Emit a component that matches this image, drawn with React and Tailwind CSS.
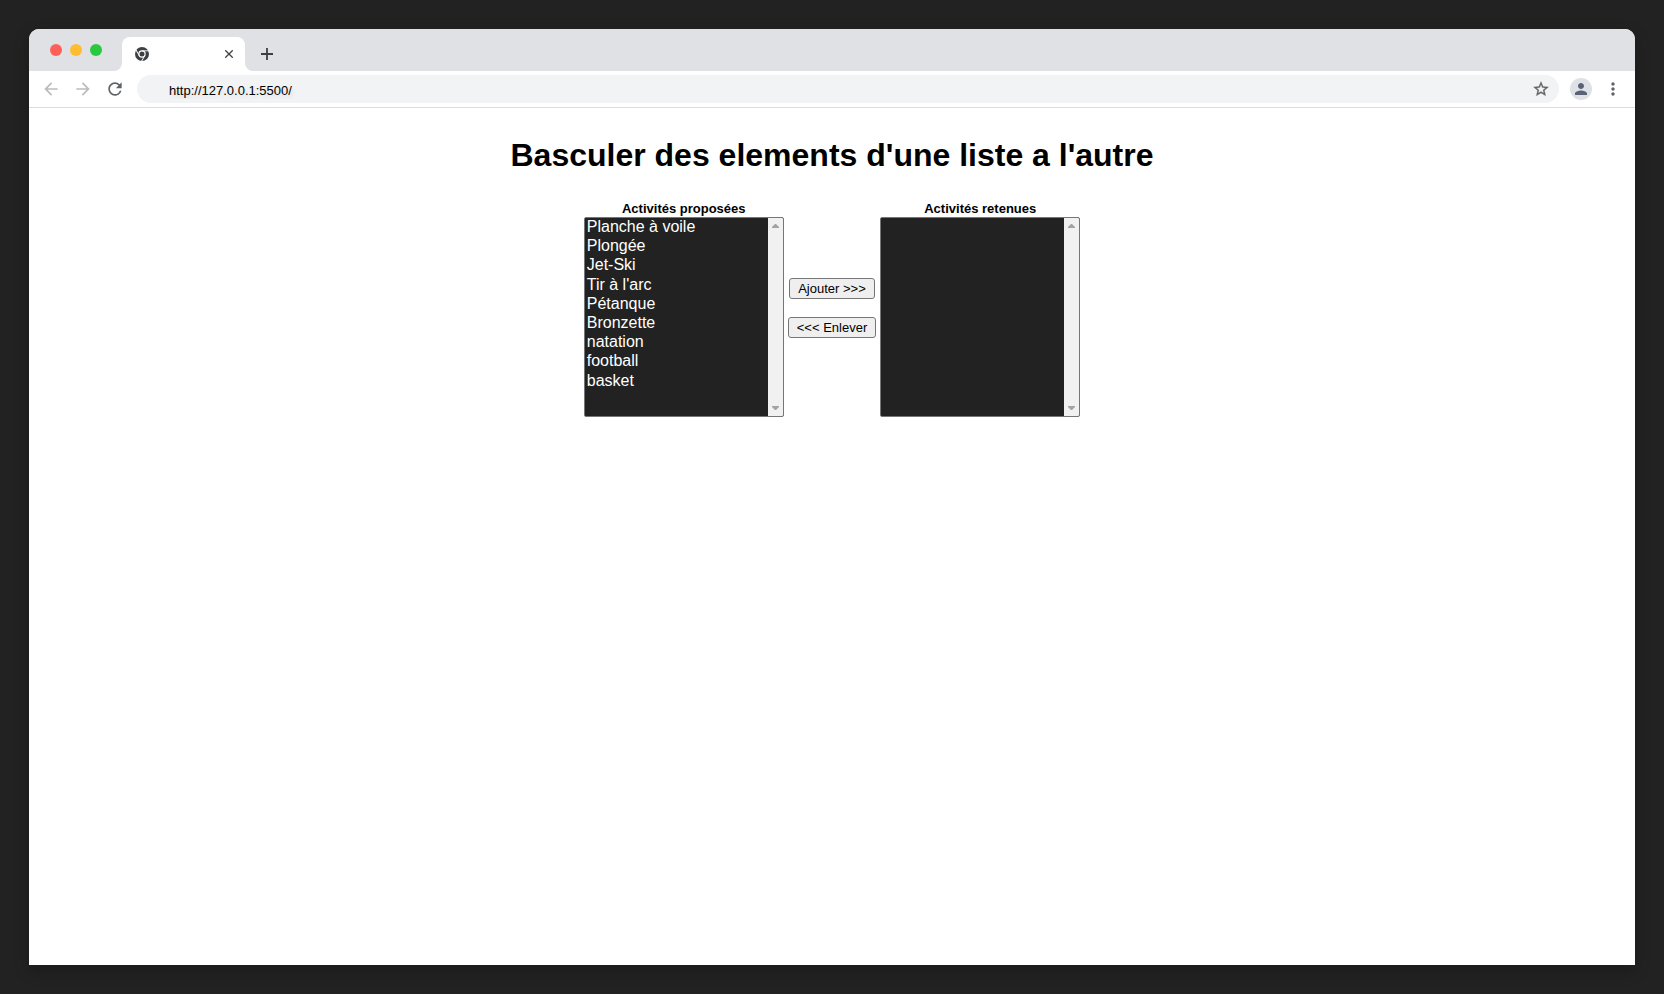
import { useState } from 'react';
import {
  MdArrowBack,
  MdArrowForward,
  MdMoreVert,
  MdPerson,
  MdRefresh,
} from 'react-icons/md';

const ACTIVITIES = [
  'Planche à voile',
  'Plongée',
  'Jet-Ski',
  "Tir à l'arc",
  'Pétanque',
  'Bronzette',
  'natation',
  'football',
  'basket',
];

function ChromeIcon() {
  return (
    <svg className="size-[14px]" viewBox="0 0 14 14" fill="none" aria-hidden="true">
      <circle cx="7" cy="7" r="7" fill="#3c4043" />
      <circle cx="7" cy="7" r="3.1" stroke="white" strokeWidth="1.2" />
      <g stroke="white" strokeWidth="0.9">
        <path d="M7 3.8h7" />
        <path d="M7 3.8h7" transform="rotate(120 7 7)" />
        <path d="M7 3.8h7" transform="rotate(240 7 7)" />
      </g>
    </svg>
  );
}

function StarIcon() {
  return (
    <svg className="size-[18px]" viewBox="0 0 24 24" fill="currentColor" stroke="currentColor" strokeWidth="0.4" aria-hidden="true">
      <path d="M22 9.24l-7.19-.62L12 2 9.19 8.63 2 9.24l5.46 4.73L5.82 21 12 17.27 18.18 21l-1.63-7.03L22 9.24zM12 15.4l-3.76 2.27 1-4.28-3.32-2.88 4.38-.38L12 6.1l1.71 4.04 4.38.38-3.32 2.88 1 4.28L12 15.4z" />
    </svg>
  );
}

function TabStrip() {
  return (
    <header className="flex h-[42px] items-end bg-[#dfe1e5]">
      <div className="flex gap-2 self-center pl-[21px]">
        <span className="size-3 rounded-full bg-[#ff5f57]" />
        <span className="size-3 rounded-full bg-[#febc2e]" />
        <span className="size-3 rounded-full bg-[#28c840]" />
      </div>
      <svg className="ml-3 size-2 fill-white" viewBox="0 0 8 8" aria-hidden="true">
        <path d="M8 0v8H0a8 8 0 0 0 8-8z" />
      </svg>
      <div className="flex h-[34px] w-[123px] items-center justify-between rounded-t-lg bg-white pl-[13px] pr-3 text-[#3c4043]">
        <ChromeIcon />
        <button type="button" aria-label="Close tab">
          <svg className="size-2" viewBox="0 0 8 8" fill="none" stroke="currentColor" strokeWidth="1.3" aria-hidden="true">
            <path d="M.3.3l7.4 7.4M7.7.3L.3 7.7" />
          </svg>
        </button>
      </div>
      <svg className="size-2 fill-white" viewBox="0 0 8 8" aria-hidden="true">
        <path d="M0 0v8h8a8 8 0 0 1-8-8z" />
      </svg>
      <button type="button" aria-label="New tab" className="flex h-[34px] items-center pl-2 text-[#3c4043]">
        <svg className="size-3" viewBox="0 0 12 12" fill="none" stroke="currentColor" strokeWidth="1.8" aria-hidden="true">
          <path d="M6 0v12M0 6h12" />
        </svg>
      </button>
    </header>
  );
}

function Toolbar() {
  return (
    <div className="flex h-[37px] items-center border-b border-[#dadce0] bg-white px-3">
      <div className="flex gap-3 text-[#5f6368]">
        <button type="button" aria-label="Back" className="text-[#babcbe]">
          <MdArrowBack size={20} />
        </button>
        <button type="button" aria-label="Forward" className="text-[#babcbe]">
          <MdArrowForward size={20} />
        </button>
        <button type="button" aria-label="Reload">
          <MdRefresh size={20} />
        </button>
      </div>
      <div className="ml-3 flex h-7 flex-1 items-center rounded-full bg-[#f1f3f4] pl-8 pr-[9px]">
        <input
          aria-label="Address"
          className="min-w-0 flex-1 bg-transparent pt-[3px] text-[13px] leading-4 text-black outline-none text-shadow-[2px_3px_4px_rgb(0_0_0/0.1)]"
          defaultValue="http://127.0.0.1:5500/"
        />
        <button type="button" aria-label="Bookmark" className="text-[#5f6368]">
          <StarIcon />
        </button>
      </div>
      <button
        type="button"
        aria-label="Profile"
        className="ml-[11px] flex size-[22px] items-center justify-center rounded-full bg-[#dee1e6] text-[#5a6275]"
      >
        <MdPerson size={18} />
      </button>
      <button type="button" aria-label="Menu" className="ml-[11px] text-[#5f6368]">
        <MdMoreVert size={20} />
      </button>
    </div>
  );
}

function ScrollGutter() {
  return (
    <div className="flex w-[15px] flex-col items-center justify-between bg-[#f1f1f1] py-[6px]" aria-hidden="true">
      <svg className="h-1 w-[7px] fill-[#a3a3a3]" viewBox="0 0 7 4">
        <path d="M3 0h1l3 3v1H0V3z" />
      </svg>
      <svg className="h-1 w-[7px] fill-[#a3a3a3]" viewBox="0 0 7 4">
        <path d="M0 0h7v1L4 4H3L0 1z" />
      </svg>
    </div>
  );
}

function ActivityList({ id, label, items, selected, onSelect }) {
  return (
    <div className="flex flex-col items-center">
      <label htmlFor={id} className="text-[13px] font-bold leading-4">
        {label}
      </label>
      <div className="flex h-[200px] w-[200px] overflow-hidden rounded-xs border border-[#767676] bg-[#222222]">
        <select
          id={id}
          multiple
          value={selected}
          onChange={(e) => onSelect(Array.from(e.target.selectedOptions, (o) => o.value))}
          className="min-w-0 flex-1 text-base text-white outline-none"
        >
          {items.map((item) => (
            <option key={item} value={item} className="px-[2px] pb-px">
              {item}
            </option>
          ))}
        </select>
        <ScrollGutter />
      </div>
    </div>
  );
}

function MoveButton({ onClick, children }) {
  return (
    <button
      type="button"
      onClick={onClick}
      className="rounded-[3px] border border-[#767676] bg-[#efefef] px-2 py-[2px] text-[13px] leading-[15px] text-black"
    >
      {children}
    </button>
  );
}

export default function App() {
  const [proposed, setProposed] = useState(ACTIVITIES);
  const [kept, setKept] = useState([]);
  const [proposedPick, setProposedPick] = useState([]);
  const [keptPick, setKeptPick] = useState([]);

  const add = () => {
    setKept([...kept, ...proposedPick]);
    setProposed(proposed.filter((a) => !proposedPick.includes(a)));
    setProposedPick([]);
  };
  const remove = () => {
    setProposed([...proposed, ...keptPick]);
    setKept(kept.filter((a) => !keptPick.includes(a)));
    setKeptPick([]);
  };

  return (
    <div className="flex min-h-screen flex-col bg-[#222222] p-[29px] font-['Liberation_Sans',Arial,sans-serif] text-black">
      <div className="flex flex-1 flex-col overflow-hidden rounded-t-[10px] bg-white shadow-[0_5px_15px_rgb(0_0_0/0.25)]">
        <TabStrip />
        <Toolbar />
        <main className="flex flex-col items-center px-2 pt-7">
          <h1 className="text-center text-[32px] font-bold leading-[38px]">
            Basculer des elements d'une liste a l'autre
          </h1>
          <form className="mt-[27px] flex gap-1">
            <ActivityList
              id="proposed"
              label="Activités proposées"
              items={proposed}
              selected={proposedPick}
              onSelect={setProposedPick}
            />
            <div className="flex flex-col items-center gap-[18px] pt-[77px]">
              <MoveButton onClick={add}>{'Ajouter >>>'}</MoveButton>
              <MoveButton onClick={remove}>{'<<< Enlever'}</MoveButton>
            </div>
            <ActivityList
              id="kept"
              label="Activités retenues"
              items={kept}
              selected={keptPick}
              onSelect={setKeptPick}
            />
          </form>
        </main>
      </div>
    </div>
  );
}
